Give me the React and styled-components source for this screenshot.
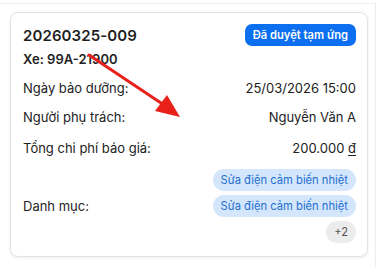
import React from "react";
import styled, { createGlobalStyle } from "styled-components";

const Global = createGlobalStyle`
  html, body { margin: 0; padding: 0; background: #ffffff; }
  body { font-family: Inter, "Noto Sans", sans-serif; color: #1f1f1f; }
  * { box-sizing: border-box; }
`;

const Page = styled.div`
  position: relative;
  width: 379px;
  height: 271px;
  padding-top: 3px;
  overflow: hidden;
`;

const Frame = styled.div`
  width: 376px;
  border-top: 1px solid #f1f1f1;
  border-right: 1px solid #ececec;
  padding: 8px 7px 10px 10px;
`;

const Card = styled.div`
  background: #fff;
  border: 1px solid #e3e3e3;
  border-radius: 8px;
  box-shadow: 0 1px 3px rgba(0, 0, 0, 0.08);
  padding: 13px 11px 12px 12px;
  height: 245px;
  display: flex;
  flex-direction: column;
`;

const Header = styled.div`
  display: flex;
  justify-content: space-between;
  align-items: flex-start;
`;

const Title = styled.div`
  font-size: 15px;
  font-weight: 600;
  line-height: 20px;
  letter-spacing: 0.1px;
`;

const Badge = styled.span`
  background: #0b6ff0;
  color: #fff;
  font-size: 11.2px;
  font-weight: 600;
  line-height: 22px;
  padding: 0 8px;
  border-radius: 7px;
  margin-top: -2px;
`;

const Plate = styled.div`
  font-size: 13px;
  font-weight: 600;
  line-height: 18px;
  margin-top: 4px;
`;

const Rows = styled.div`
  display: flex;
  flex-direction: column;
  margin-top: 11px;
`;

const Row = styled.div`
  display: flex;
  justify-content: space-between;
  align-items: ${(p) => (p.$center ? "center" : "flex-start")};
  font-size: 13px;
  line-height: 18px;
  margin-top: ${(p) => p.$mt || 0}px;
`;

const Label = styled.span`
  color: #222;
`;

const Value = styled.span`
  color: #222;
  text-align: right;
`;

const Dong = styled.span`
  text-decoration: underline;
  text-underline-offset: 2px;
`;

const Chips = styled.div`
  display: flex;
  flex-direction: column;
  align-items: flex-end;
  gap: 4px;
`;

const Chip = styled.span`
  background: ${(p) => (p.$more ? "#ececec" : "#d3e6fc")};
  color: ${(p) => (p.$more ? "#555" : "#1f6fd1")};
  font-size: 11.2px;
  line-height: 22px;
  padding: 0 ${(p) => (p.$more ? "8px" : "8px")};
  border-radius: 11px;
`;

const Arrow = styled.svg`
  position: absolute;
  left: 0;
  top: 0;
  pointer-events: none;
`;

export default function App() {
  return (
    <>
      <Global />
      <Page>
        <Frame>
          <Card>
            <Header>
              <Title>20260325-009</Title>
              <Badge>Đã duyệt tạm ứng</Badge>
            </Header>
            <Plate>Xe: 99A-21900</Plate>
            <Rows>
              <Row>
                <Label>Ngày bảo dưỡng:</Label>
                <Value>25/03/2026 15:00</Value>
              </Row>
              <Row $mt={11}>
                <Label>Người phụ trách:</Label>
                <Value>Nguyễn Văn A</Value>
              </Row>
              <Row $mt={13}>
                <Label>Tổng chi phí báo giá:</Label>
                <Value>
                  200.000 <Dong>đ</Dong>
                </Value>
              </Row>
              <Row $mt={12} $center>
                <Label>Danh mục:</Label>
                <Chips>
                  <Chip>Sửa điện cảm biến nhiệt</Chip>
                  <Chip>Sửa điện cảm biến nhiệt</Chip>
                  <Chip $more>+2</Chip>
                </Chips>
              </Row>
            </Rows>
          </Card>
        </Frame>
        <Arrow width="379" height="271" viewBox="0 0 379 271">
          <line x1="89" y1="55" x2="164" y2="105" stroke="#e8221b" strokeWidth="3" strokeLinecap="round" />
          <polygon points="180,117 155,111 167,95" fill="#e8221b" />
        </Arrow>
      </Page>
    </>
  );
}
